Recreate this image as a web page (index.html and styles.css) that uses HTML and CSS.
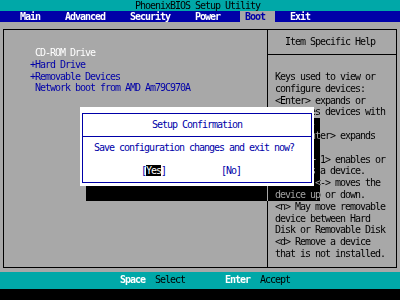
FILE: index.html
```html
<!DOCTYPE html>
<html>
<head>
    <link rel="stylesheet" href="styles.css">
</head>
<body>
    <div class="title">PhoenixBIOS Setup Utility</div>
    <nav class="menu">
        <span>Main</span>
        <span>Advanced</span>
        <span>Security</span>
        <span>Power</span>
        <span class="active">Boot</span>
        <span class="exit">Exit</span>
    </nav>
    <main class="main">
        <div class="frame">
            <div class="list">
                <div class="item open"> CD-ROM Drive</div>
                <div class="item">+Hard Drive</div>
                <div class="item">+Removable Devices</div>
                <div class="item"> Network boot from AMD Am79C970A</div>
            </div>
            <div class="help">
                <div class="help-head">Item Specific Help</div>
                <div class="help-text">Keys used to view or
configure devices:
&lt;Enter&gt; expands or
collapses devices with
a + or -
&lt;Ctrl+Enter&gt; expands
all
&lt;Shift + 1&gt; enables or
disables a device.
&lt;+&gt; and &lt;-&gt; moves the
device up or down.
&lt;n&gt; May move removable
device between Hard
Disk or Removable Disk
&lt;d&gt; Remove a device
that is not installed.</div>
            </div>
        </div>

        <div class="dialog-shadow"></div>
        <div class="dialog">
            <div class="dialog-inner">
                <div class="dialog-title">Setup Confirmation</div>
                <div class="dialog-msg">Save configuration changes and exit now?</div>
                <div class="dialog-buttons">
                    <span>[<span class="sel">Yes</span>]</span>
                    <span>[No]</span>
                </div>
            </div>
        </div>
    </main>
    <footer class="keys">
        <span class="key">Space</span>
        <span class="desc">Select</span>
        <span class="key enter">Enter</span>
        <span class="desc">Accept</span>
    </footer>
</body>
</html>
```

FILE: styles.css
```css
* {
    box-sizing: border-box;
}

body {
    margin: 0;
    width: 400px;
    height: 300px;
    overflow: hidden;
    background-color: #000;
    font-family: "DejaVu Sans Mono", monospace;
    font-size: 10px;
    letter-spacing: -1.02px;
    line-height: 11.8px;
}

.title {
    height: 11px;
    line-height: 11px;
    padding-left: 135px;
    background-color: #00a8a8;
    color: #000;
}

.menu {
    display: flex;
    gap: 15px;
    height: 11px;
    line-height: 11px;
    padding-left: 15px;
    background-color: #0000a8;
    color: #fff;
    font-weight: bold;
}

.menu span {
    padding: 0 5px;
}

.menu .active {
    padding-right: 10px;
    background-color: #a8a8a8;
    color: #0000a8;
}

.menu .exit {
    margin-left: -5px;
}

.main {
    position: relative;
    height: 250px;
    padding: 7px 3px 0 3px;
    background-color: #a8a8a8;
}

.frame {
    display: grid;
    grid-template-columns: 264px 1fr;
    height: 239px;
    border: 1px solid #000;
}

.list {
    padding: 17px 0 0 26px;
    border-right: 1px solid #000;
}

.item {
    white-space: pre;
    color: #0000a8;
}

.item.open {
    color: #fff;
}

.help-head {
    height: 25px;
    line-height: 24px;
    padding-left: 17px;
    border-bottom: 1px solid #000;
    color: #000;
}

.help-text {
    padding: 16px 0 0 7px;
    white-space: pre;
    color: #000;
}

/* text-mode shadow: gray bg turns black, black text turns gray */
.dialog-shadow {
    position: absolute;
    top: 96px;
    left: 86px;
    width: 234px;
    height: 83px;
    background-color: #a8a8a8;
    mix-blend-mode: difference;
}

.dialog {
    position: absolute;
    top: 85px;
    left: 80px;
    width: 234px;
    height: 79px;
    padding: 6px 2px 3px 2px;
    background-color: #fff;
    color: #0000a8;
}

.dialog-inner {
    height: 100%;
    border: 1px solid #0000a8;
}

.dialog-title {
    height: 23px;
    line-height: 22px;
    text-align: center;
    border-bottom: 1px solid #0000a8;
}

.dialog-msg {
    padding: 5px 0 0 11px;
    white-space: pre;
}

.dialog-buttons {
    display: flex;
    gap: 55px;
    padding: 11px 0 0 58px;
}

.sel {
    background-color: #000;
    color: #fff;
}

.keys {
    display: flex;
    height: 17px;
    line-height: 15px;
    padding-left: 120px;
    background-color: #00a8a8;
}

.key {
    color: #fff;
    font-weight: bold;
    margin-right: 10px;
}

.desc {
    color: #000;
}

.key.enter {
    margin-left: 40px;
}
```
